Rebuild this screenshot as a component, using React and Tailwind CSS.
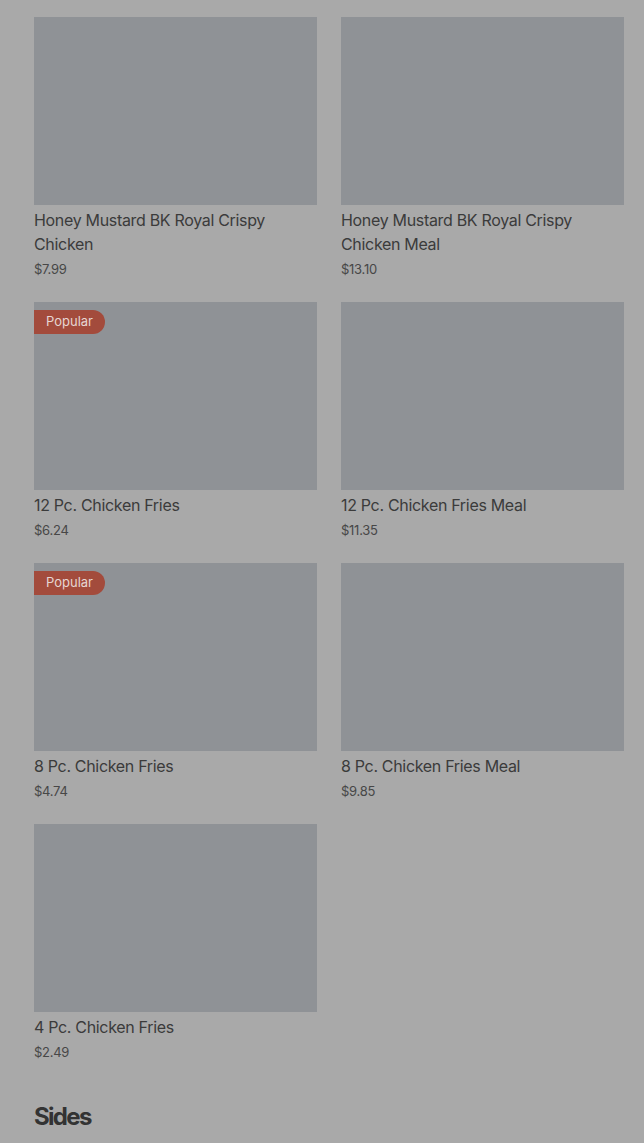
const ITEMS = [
  { name: 'Honey Mustard BK Royal Crispy Chicken', price: '$7.99' },
  { name: 'Honey Mustard BK Royal Crispy Chicken Meal', price: '$13.10' },
  { name: '12 Pc. Chicken Fries', price: '$6.24', popular: true },
  { name: '12 Pc. Chicken Fries Meal', price: '$11.35' },
  { name: '8 Pc. Chicken Fries', price: '$4.74', popular: true },
  { name: '8 Pc. Chicken Fries Meal', price: '$9.85' },
  { name: '4 Pc. Chicken Fries', price: '$2.49' },
]

function ItemCard({ item }) {
  return (
    <div className="flex flex-col">
      <div className="relative h-[188px] bg-[#8f9296]">
        {item.popular && (
          <span className="absolute left-0 top-2 flex h-6 items-center rounded-r-full bg-[#a34b3c] pl-3 pr-3 text-[13px] text-[#e6d6d2]">
            Popular
          </span>
        )}
      </div>
      <p className="mt-[3px] text-[16px] leading-6 tracking-[-0.02em] text-[#3b3b3b]">{item.name}</p>
      <p className="mt-[3px] text-[13px] leading-5 tracking-[-0.02em] text-[#474747]">{item.price}</p>
    </div>
  )
}

export default function App() {
  return (
    <div
      className="min-h-[1143px] bg-[#a9a9a9] pl-[34px] pr-[20px] pt-[17px]"
      style={{ fontFamily: 'Inter, "Noto Sans", sans-serif' }}
    >
      <div className="grid grid-cols-2 gap-x-6 gap-y-[23px]">
        {ITEMS.map((item) => (
          <ItemCard key={item.name} item={item} />
        ))}
      </div>
      <h2 className="mt-[39px] text-[24px] font-bold leading-8 tracking-[-0.07em] text-[#333333]">Sides</h2>
    </div>
  )
}
